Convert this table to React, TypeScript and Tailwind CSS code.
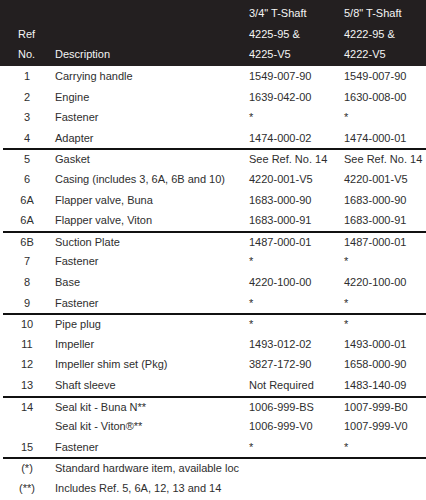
import React from "react";

type Row = { ref: string; desc: string; a: string; b: string; line?: boolean };

const rows: Row[] = [
  { ref: "1", desc: "Carrying handle", a: "1549-007-90", b: "1549-007-90" },
  { ref: "2", desc: "Engine", a: "1639-042-00", b: "1630-008-00" },
  { ref: "3", desc: "Fastener", a: "*", b: "*" },
  { ref: "4", desc: "Adapter", a: "1474-000-02", b: "1474-000-01" },
  { ref: "5", desc: "Gasket", a: "See Ref. No. 14", b: "See Ref. No. 14", line: true },
  { ref: "6", desc: "Casing (includes 3, 6A, 6B and 10)", a: "4220-001-V5", b: "4220-001-V5" },
  { ref: "6A", desc: "Flapper valve, Buna", a: "1683-000-90", b: "1683-000-90" },
  { ref: "6A", desc: "Flapper valve, Viton", a: "1683-000-91", b: "1683-000-91" },
  { ref: "6B", desc: "Suction Plate", a: "1487-000-01", b: "1487-000-01", line: true },
  { ref: "7", desc: "Fastener", a: "*", b: "*" },
  { ref: "8", desc: "Base", a: "4220-100-00", b: "4220-100-00" },
  { ref: "9", desc: "Fastener", a: "*", b: "*" },
  { ref: "10", desc: "Pipe plug", a: "*", b: "*", line: true },
  { ref: "11", desc: "Impeller", a: "1493-012-02", b: "1493-000-01" },
  { ref: "12", desc: "Impeller shim set (Pkg)", a: "3827-172-90", b: "1658-000-90" },
  { ref: "13", desc: "Shaft sleeve", a: "Not Required", b: "1483-140-09" },
  { ref: "14", desc: "Seal kit - Buna N**", a: "1006-999-BS", b: "1007-999-B0", line: true },
  { ref: "", desc: "Seal kit - Viton®**", a: "1006-999-V0", b: "1007-999-V0" },
  { ref: "15", desc: "Fastener", a: "*", b: "*" },
  { ref: "(*)", desc: "Standard hardware item, available loc", a: "", b: "", line: true },
  { ref: "(**)", desc: "Includes Ref. 5, 6A, 12, 13 and 14", a: "", b: "" },
];

export default function App() {
  return (
    <div
      className="w-[426px] h-[500px] overflow-hidden bg-white text-[11px] text-[#2e2e2e]"
      style={{ fontFamily: '"Liberation Sans", Arial, sans-serif' }}
    >
      <div className="w-[426px] h-[66px] bg-[#231f20] text-[#f4f4f4] pt-[3px] flex">
        <div className="w-[55px] pl-[18px] flex flex-col">
          <div className="h-[20.5px]" />
          <div className="h-[20.5px] flex items-center">Ref</div>
          <div className="h-[20.5px] flex items-center">No.</div>
        </div>
        <div className="w-[194px] flex flex-col">
          <div className="h-[20.5px]" />
          <div className="h-[20.5px]" />
          <div className="h-[20.5px] flex items-center">Description</div>
        </div>
        <div className="w-[95px] flex flex-col">
          <div className="h-[20.5px] flex items-center">3/4" T-Shaft</div>
          <div className="h-[20.5px] flex items-center">4225-95 &amp;</div>
          <div className="h-[20.5px] flex items-center">4225-V5</div>
        </div>
        <div className="flex-1 flex flex-col whitespace-nowrap">
          <div className="h-[20.5px] flex items-center">5/8" T-Shaft</div>
          <div className="h-[20.5px] flex items-center">4222-95 &amp;</div>
          <div className="h-[20.5px] flex items-center">4222-V5</div>
        </div>
      </div>
      <div className="ml-[3px] w-[423px]">
        {rows.map((r, i) => (
          <div
            key={i}
            className={
              "h-[20.6px] flex items-center " +
              (r.line ? "border-t-2 border-[#111111]" : "")
            }
          >
            <div className="w-[48px] shrink-0 text-center whitespace-nowrap">{r.ref}</div>
            <div className="w-[193px] shrink-0 pl-[4px] whitespace-nowrap">{r.desc}</div>
            <div className="w-[100px] shrink-0 pl-[5px] whitespace-nowrap">{r.a}</div>
            <div className="flex-1 whitespace-nowrap">{r.b}</div>
          </div>
        ))}
      </div>
    </div>
  );
}
